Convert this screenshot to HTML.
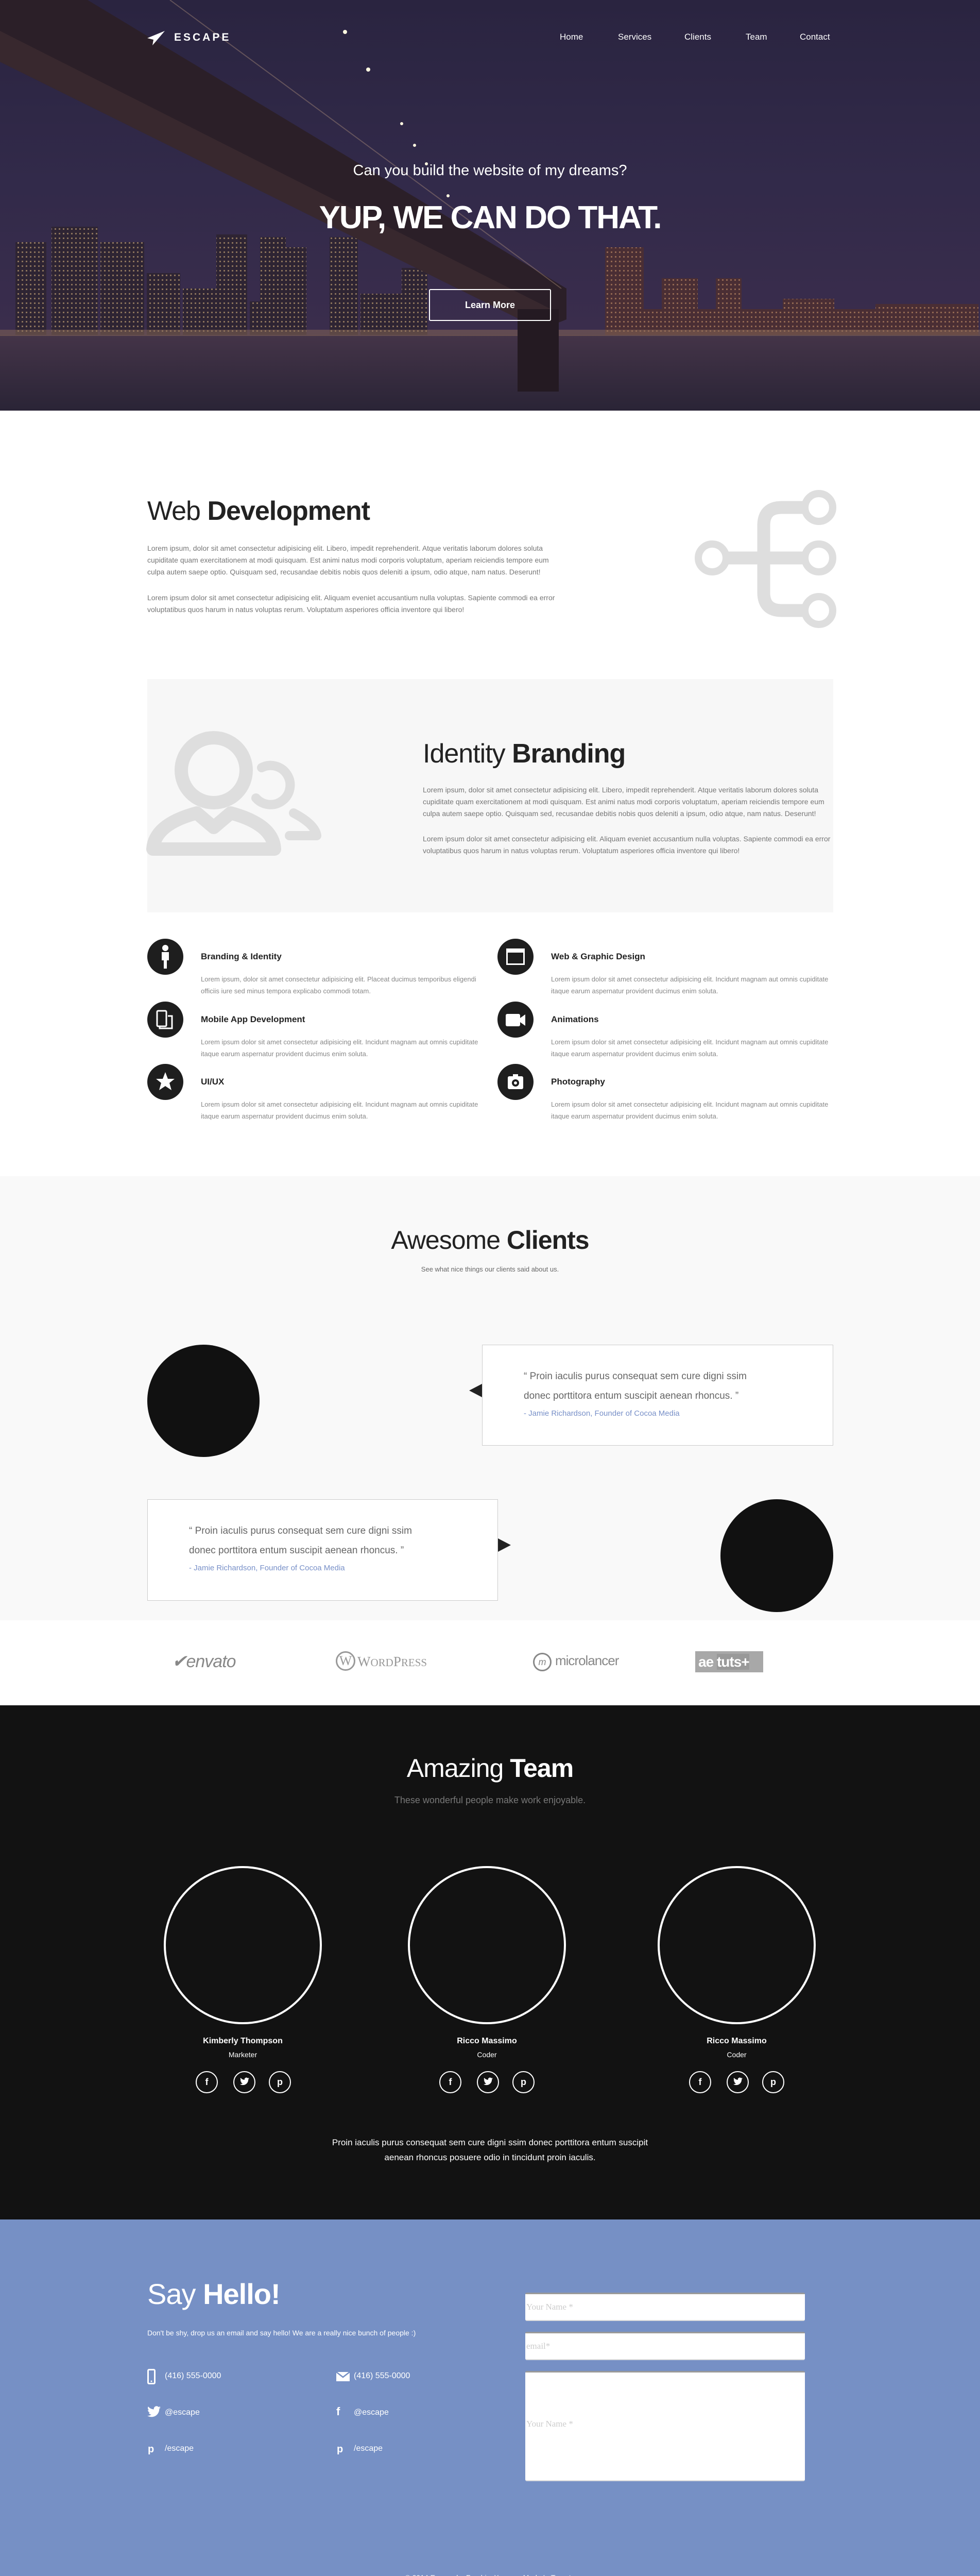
<!DOCTYPE html>
<html style="width:1903px;height:5051px;overflow:hidden"><head><meta charset="utf-8">
<style>
*{margin:0;padding:0;box-sizing:border-box}
body{width:1903px;height:5051px;font-family:"Liberation Sans",sans-serif;background:#fff;position:relative;overflow:hidden;color:#222}
.abs{position:absolute}
.hero{left:0;top:0;width:1903px;height:797px;background:linear-gradient(#2a2440 0%,#322a4a 45%,#3a2d4c 80%,#2f2740 100%);overflow:hidden}
.nav a{position:absolute;top:62px;color:#fff;font-size:17px;text-decoration:none}
h2.t{font-size:52px;font-weight:normal;letter-spacing:-1px}
h2.t b{font-weight:bold}
p.g{font-size:14px;line-height:23px;color:#777}
.svc .c{position:absolute;width:70px;height:70px;border-radius:50%;background:#1e1e1e}
.svc h4{position:absolute;font-size:17px;font-weight:bold;color:#222}
.svc p{position:absolute;font-size:13px;line-height:23px;color:#888;width:540px}
.box{background:#fff;border:1px solid #ccc}
.q{font-size:19px;line-height:38px;color:#666}
.au{font-size:15px;color:#7890c8;margin-top:6px}
.tc{border:4px solid #fff;border-radius:50%;width:307px;height:307px}
.soc{width:43px;height:43px;border:2px solid #fff;border-radius:50%;color:#fff;font-size:18px;text-align:center;line-height:39px;font-weight:bold}
.soc svg{margin-top:10px}
.name{color:#fff;font-weight:bold;font-size:16px;text-align:center;width:307px}
.role{color:#fff;font-size:14px;text-align:center;width:307px}
.ci{color:#fff;font-size:16px}
.inp{background:#fff;border-top:3px solid #999;border-bottom:2px solid #ddd;border-radius:3px;font-family:"Liberation Serif",serif;font-size:17px;color:#ccc;padding-left:2px}
</style></head><body>

<div class="abs hero">
<svg width="1903" height="797" viewBox="0 0 1903 797" style="position:absolute;left:0;top:0">
<defs>
<linearGradient id="w" x1="0" y1="0" x2="0" y2="1"><stop offset="0" stop-color="#443448"/><stop offset="1" stop-color="#2a2436"/></linearGradient>
<pattern id="win" width="8" height="9" patternUnits="userSpaceOnUse"><rect width="8" height="9" fill="#2e2433"/><rect x="2" y="2" width="3" height="3" fill="#c9a878" opacity="0.6"/></pattern>
<pattern id="win2" width="8" height="9" patternUnits="userSpaceOnUse"><rect width="8" height="9" fill="#4a2e34"/><rect x="2" y="2" width="3" height="3" fill="#d8a070" opacity="0.5"/></pattern>
</defs>
<g fill="url(#win)">
<rect x="30" y="470" width="60" height="190"/><rect x="100" y="440" width="90" height="220"/><rect x="195" y="470" width="85" height="190"/>
<rect x="285" y="530" width="65" height="130"/><rect x="355" y="560" width="65" height="100"/><rect x="420" y="455" width="60" height="205"/>
<rect x="485" y="585" width="60" height="75"/><rect x="505" y="460" width="50" height="200"/><rect x="555" y="480" width="40" height="180"/>
<rect x="640" y="460" width="55" height="200"/><rect x="700" y="570" width="80" height="90"/><rect x="780" y="520" width="50" height="140"/>
</g>
<g fill="url(#win2)">
<rect x="1175" y="480" width="75" height="180"/><rect x="1285" y="540" width="70" height="120"/><rect x="1390" y="540" width="50" height="120"/>
<rect x="1200" y="600" width="700" height="60"/><rect x="1520" y="580" width="100" height="80"/><rect x="1700" y="590" width="200" height="70"/>
</g>
<rect x="0" y="650" width="1903" height="147" fill="url(#w)"/>
<rect x="0" y="640" width="1903" height="12" fill="#8a6a58" opacity="0.5"/>
<polygon points="0,0 170,0 1100,560 1100,620 1050,640 0,120" fill="#2b1f28"/>
<polygon points="0,60 0,120 1050,640 1070,600" fill="#3e2c30" opacity="0.7"/>
<rect x="1005" y="600" width="80" height="160" fill="#241a22"/>
<line x1="330" y1="0" x2="1090" y2="560" stroke="#c9a688" stroke-width="2" opacity="0.35"/>
<g fill="#fff8e0"><circle cx="670" cy="62" r="4"/><circle cx="715" cy="135" r="4"/><circle cx="780" cy="240" r="3"/><circle cx="805" cy="282" r="3"/><circle cx="828" cy="318" r="3"/><circle cx="870" cy="380" r="3"/></g>
</svg>
<svg class="abs" style="left:286px;top:60px" width="34" height="28" viewBox="0 0 34 28"><path d="M34 0 L0 14 L12 17 L10 28 L17 20 Z" fill="#fff"/></svg>
<div class="abs" style="left:338px;top:61px;color:#fff;font-size:21px;font-weight:bold;letter-spacing:4px">ESCAPE</div>
<div class="nav"><a style="left:1087px">Home</a><a style="left:1200px">Services</a><a style="left:1329px">Clients</a><a style="left:1448px">Team</a><a style="left:1553px">Contact</a></div>
<div class="abs" style="left:0;width:1903px;top:315px;text-align:center;color:#fff;font-size:29px">Can you build the website of my dreams?</div>
<div class="abs" style="left:0;width:1903px;top:387px;text-align:center;color:#fff;font-size:62px;font-weight:bold;letter-spacing:-2px">YUP, WE CAN DO THAT.</div>
<div class="abs" style="left:833px;top:561px;width:237px;height:62px;border:2px solid #fff;border-radius:3px;color:#fff;font-size:18px;font-weight:bold;text-align:center;line-height:58px">Learn More</div>
</div>

<h2 class="abs t" style="left:286px;top:962px">Web <b>Development</b></h2>
<p class="abs g" style="left:286px;top:1053px;width:800px">Lorem ipsum, dolor sit amet consectetur adipisicing elit. Libero, impedit reprehenderit. Atque veritatis laborum dolores soluta cupiditate quam exercitationem at modi quisquam. Est animi natus modi corporis voluptatum, aperiam reiciendis tempore eum culpa autem saepe optio. Quisquam sed, recusandae debitis nobis quos deleniti a ipsum, odio atque, nam natus. Deserunt!</p>
<p class="abs g" style="left:286px;top:1149px;width:800px">Lorem ipsum dolor sit amet consectetur adipisicing elit. Aliquam eveniet accusantium nulla voluptas. Sapiente commodi ea error voluptatibus quos harum in natus voluptas rerum. Voluptatum asperiores officia inventore qui libero!</p>
<svg class="abs" style="left:0;top:0" width="1903" height="1800"><g fill="none" stroke="#dedede" stroke-width="25">
<circle cx="1383" cy="1083" r="27" stroke-width="14"/><circle cx="1590" cy="985" r="27" stroke-width="14"/><circle cx="1590" cy="1083" r="27" stroke-width="14"/><circle cx="1590" cy="1185" r="27" stroke-width="14"/>
<path d="M1410 1083 H1563 M1563 985 H1518 q-35 0 -35 35 V1150 q0 35 35 35 H1563"/></g></svg>

<div class="abs" style="left:286px;top:1318px;width:1332px;height:453px;background:#f7f7f7"></div>
<svg class="abs" style="left:0;top:0" width="700" height="1800"><g fill="none" stroke="#dedede" stroke-width="26" stroke-linecap="round" stroke-linejoin="round">
<circle cx="415" cy="1495" r="63"/><path d="M508 1490 A38 38 0 1 1 497 1549" stroke-width="18"/>
<path d="M297 1648 Q300 1600 382 1578 L415 1606 L448 1578 Q530 1600 533 1648 Z"/>
<path d="M570 1578 Q612 1600 615 1622 H562" stroke-width="18"/></g></svg>
<h2 class="abs t" style="left:821px;top:1433px">Identity <b>Branding</b></h2>
<p class="abs g" style="left:821px;top:1522px;width:790px">Lorem ipsum, dolor sit amet consectetur adipisicing elit. Libero, impedit reprehenderit. Atque veritatis laborum dolores soluta cupiditate quam exercitationem at modi quisquam. Est animi natus modi corporis voluptatum, aperiam reiciendis tempore eum culpa autem saepe optio. Quisquam sed, recusandae debitis nobis quos deleniti a ipsum, odio atque, nam natus. Deserunt!</p>
<p class="abs g" style="left:821px;top:1617px;width:800px">Lorem ipsum dolor sit amet consectetur adipisicing elit. Aliquam eveniet accusantium nulla voluptas. Sapiente commodi ea error voluptatibus quos harum in natus voluptas rerum. Voluptatum asperiores officia inventore qui libero!</p>

<div class="svc">
<div class="c" style="left:286px;top:1822px"><svg width="70" height="70"><circle cx="35" cy="18" r="6" fill="#fff"/><path d="M28 26h14v16h-4v16h-6v-16h-4z" fill="#fff"/></svg></div>
<h4 style="left:390px;top:1847px">Branding &amp; Identity</h4>
<p style="left:390px;top:1889px">Lorem ipsum, dolor sit amet consectetur adipisicing elit. Placeat ducimus temporibus eligendi officiis iure sed minus tempora explicabo commodi totam.</p>
<div class="c" style="left:966px;top:1822px"><svg width="70" height="70"><rect x="17" y="19" width="36" height="32" fill="#fff"/><rect x="20" y="27" width="30" height="21" fill="#1e1e1e"/></svg></div>
<h4 style="left:1070px;top:1847px">Web &amp; Graphic Design</h4>
<p style="left:1070px;top:1889px">Lorem ipsum dolor sit amet consectetur adipisicing elit. Incidunt magnam aut omnis cupiditate itaque earum aspernatur provident ducimus enim soluta.</p>
<div class="c" style="left:286px;top:1944px"><svg width="70" height="70"><rect x="19" y="18" width="18" height="30" rx="2" fill="none" stroke="#fff" stroke-width="3"/><path d="M40 28h8v24h-24v-3" fill="none" stroke="#fff" stroke-width="3"/></svg></div>
<h4 style="left:390px;top:1969px">Mobile App Development</h4>
<p style="left:390px;top:2011px">Lorem ipsum dolor sit amet consectetur adipisicing elit. Incidunt magnam aut omnis cupiditate itaque earum aspernatur provident ducimus enim soluta.</p>
<div class="c" style="left:966px;top:1944px"><svg width="70" height="70"><rect x="16" y="24" width="28" height="24" rx="3" fill="#fff"/><path d="M44 32l10-7v22l-10-7z" fill="#fff"/></svg></div>
<h4 style="left:1070px;top:1969px">Animations</h4>
<p style="left:1070px;top:2011px">Lorem ipsum dolor sit amet consectetur adipisicing elit. Incidunt magnam aut omnis cupiditate itaque earum aspernatur provident ducimus enim soluta.</p>
<div class="c" style="left:286px;top:2065px"><svg width="70" height="70"><path d="M35 16l5 13h13l-10 8 4 14-12-8-12 8 4-14-10-8h13z" fill="#fff"/></svg></div>
<h4 style="left:390px;top:2090px">UI/UX</h4>
<p style="left:390px;top:2132px">Lorem ipsum dolor sit amet consectetur adipisicing elit. Incidunt magnam aut omnis cupiditate itaque earum aspernatur provident ducimus enim soluta.</p>
<div class="c" style="left:966px;top:2065px"><svg width="70" height="70"><rect x="20" y="24" width="30" height="25" rx="3" fill="#fff"/><rect x="30" y="20" width="10" height="5" fill="#fff"/><circle cx="35" cy="37" r="7" fill="#1e1e1e"/><circle cx="35" cy="37" r="3" fill="#fff"/></svg></div>
<h4 style="left:1070px;top:2090px">Photography</h4>
<p style="left:1070px;top:2132px">Lorem ipsum dolor sit amet consectetur adipisicing elit. Incidunt magnam aut omnis cupiditate itaque earum aspernatur provident ducimus enim soluta.</p>
</div>

<div class="abs" style="left:0;top:2283px;width:1903px;height:862px;background:#f9f9f9"></div>
<h2 class="abs t" style="left:0;width:1903px;text-align:center;top:2378px;font-size:50px">Awesome <b>Clients</b></h2>
<div class="abs" style="left:0;width:1903px;text-align:center;top:2456px;font-size:13px;color:#666">See what nice things our clients said about us.</div>
<div class="abs" style="left:286px;top:2610px;width:218px;height:218px;border-radius:50%;background:#111"></div>
<div class="abs" style="left:911px;top:2686px;width:0;height:0;border-top:13px solid transparent;border-bottom:13px solid transparent;border-right:25px solid #222"></div>
<div class="abs box" style="left:936px;top:2610px;width:682px;height:196px;padding:42px 0 0 80px"><div class="q">“ Proin iaculis purus consequat sem cure digni ssim<br>donec porttitora entum suscipit aenean rhoncus. ”</div><div class="au">- Jamie Richardson, Founder of Cocoa Media</div></div>
<div class="abs box" style="left:286px;top:2910px;width:681px;height:197px;padding:42px 0 0 80px"><div class="q">“ Proin iaculis purus consequat sem cure digni ssim<br>donec porttitora entum suscipit aenean rhoncus. ”</div><div class="au">- Jamie Richardson, Founder of Cocoa Media</div></div>
<div class="abs" style="left:967px;top:2986px;width:0;height:0;border-top:13px solid transparent;border-bottom:13px solid transparent;border-left:25px solid #222"></div>
<div class="abs" style="left:1399px;top:2910px;width:219px;height:219px;border-radius:50%;background:#111"></div>

<div class="abs" style="left:334px;top:3205px;font-size:34px;font-style:italic;color:#888;letter-spacing:-1px">✔envato</div>
<div class="abs" style="left:652px;top:3205px;width:38px;height:38px;border-radius:50%;border:3px solid #999;color:#999;font-family:'Liberation Serif',serif;font-size:26px;text-align:center;line-height:32px">W</div>
<div class="abs" style="left:694px;top:3210px;font-family:'Liberation Serif',serif;font-size:27px;color:#999">W<span style="font-size:21px">ORD</span>P<span style="font-size:21px">RESS</span></div>
<div class="abs" style="left:1035px;top:3208px;width:36px;height:36px;border-radius:50%;border:3px solid #888;color:#888;font-size:18px;text-align:center;line-height:30px;font-style:italic">m</div>
<div class="abs" style="left:1078px;top:3208px;font-size:26px;color:#888;letter-spacing:-1px">microlancer</div>
<div class="abs" style="left:1350px;top:3205px;width:132px;height:41px;background:#a8a8a8;color:#fff;font-size:28px;font-weight:bold;line-height:41px;padding-left:6px;letter-spacing:-1px">ae <span style="background:#999">tuts+</span></div>

<div class="abs" style="left:0;top:3310px;width:1903px;height:998px;background:#121212"></div>
<h2 class="abs t" style="left:0;width:1903px;text-align:center;top:3403px;font-size:50px;color:#fff">Amazing <b>Team</b></h2>
<div class="abs" style="left:0;width:1903px;text-align:center;top:3484px;font-size:18px;color:#777">These wonderful people make work enjoyable.</div>
<div class="abs tc" style="left:318px;top:3622px"></div>
<div class="abs tc" style="left:792px;top:3622px"></div>
<div class="abs tc" style="left:1277px;top:3622px"></div>
<div class="abs name" style="left:318px;top:3953px">Kimberly Thompson</div><div class="abs role" style="left:318px;top:3980px">Marketer</div>
<div class="abs name" style="left:792px;top:3953px">Ricco Massimo</div><div class="abs role" style="left:792px;top:3980px">Coder</div>
<div class="abs name" style="left:1277px;top:3953px">Ricco Massimo</div><div class="abs role" style="left:1277px;top:3980px">Coder</div>
<div class="abs soc" style="left:380px;top:4020px">f</div><div class="abs soc" style="left:453px;top:4020px"><svg width="18" height="16" viewBox="0 0 24 20"><path d="M24 2.4a10 10 0 0 1-2.8.8A5 5 0 0 0 23.3.5a10 10 0 0 1-3.1 1.2A4.9 4.9 0 0 0 11.8 6 14 14 0 0 1 1.7.9a4.9 4.9 0 0 0 1.5 6.6A4.9 4.9 0 0 1 1 6.9a4.9 4.9 0 0 0 3.9 4.8 5 5 0 0 1-2.2.1 4.9 4.9 0 0 0 4.6 3.4A9.9 9.9 0 0 1 0 17.3 14 14 0 0 0 7.5 19.5c9 0 14-7.5 14-14v-.6A10 10 0 0 0 24 2.4z" fill="#fff"/></svg></div><div class="abs soc" style="left:522px;top:4020px">p</div>
<div class="abs soc" style="left:853px;top:4020px">f</div><div class="abs soc" style="left:926px;top:4020px"><svg width="18" height="16" viewBox="0 0 24 20"><path d="M24 2.4a10 10 0 0 1-2.8.8A5 5 0 0 0 23.3.5a10 10 0 0 1-3.1 1.2A4.9 4.9 0 0 0 11.8 6 14 14 0 0 1 1.7.9a4.9 4.9 0 0 0 1.5 6.6A4.9 4.9 0 0 1 1 6.9a4.9 4.9 0 0 0 3.9 4.8 5 5 0 0 1-2.2.1 4.9 4.9 0 0 0 4.6 3.4A9.9 9.9 0 0 1 0 17.3 14 14 0 0 0 7.5 19.5c9 0 14-7.5 14-14v-.6A10 10 0 0 0 24 2.4z" fill="#fff"/></svg></div><div class="abs soc" style="left:995px;top:4020px">p</div>
<div class="abs soc" style="left:1338px;top:4020px">f</div><div class="abs soc" style="left:1411px;top:4020px"><svg width="18" height="16" viewBox="0 0 24 20"><path d="M24 2.4a10 10 0 0 1-2.8.8A5 5 0 0 0 23.3.5a10 10 0 0 1-3.1 1.2A4.9 4.9 0 0 0 11.8 6 14 14 0 0 1 1.7.9a4.9 4.9 0 0 0 1.5 6.6A4.9 4.9 0 0 1 1 6.9a4.9 4.9 0 0 0 3.9 4.8 5 5 0 0 1-2.2.1 4.9 4.9 0 0 0 4.6 3.4A9.9 9.9 0 0 1 0 17.3 14 14 0 0 0 7.5 19.5c9 0 14-7.5 14-14v-.6A10 10 0 0 0 24 2.4z" fill="#fff"/></svg></div><div class="abs soc" style="left:1480px;top:4020px">p</div>
<div class="abs" style="left:0;width:1903px;text-align:center;top:4144px;font-size:17px;line-height:29px;color:#fff">Proin iaculis purus consequat sem cure digni ssim donec porttitora entum suscipit<br>aenean rhoncus posuere odio in tincidunt proin iaculis.</div>

<div class="abs" style="left:0;top:4308px;width:1903px;height:743px;background:#7690c5"></div>
<h2 class="abs t" style="left:286px;top:4420px;font-size:56px;color:#fff">Say <b>Hello!</b></h2>
<div class="abs" style="left:286px;top:4520px;font-size:14px;color:#fff">Don't be shy, drop us an email and say hello! We are a really nice bunch of people :)</div>
<svg class="abs" style="left:286px;top:4598px" width="16" height="30"><rect x="1.5" y="1.5" width="13" height="27" rx="2" fill="none" stroke="#fff" stroke-width="3"/><circle cx="8" cy="24" r="1.5" fill="#fff"/></svg>
<div class="abs ci" style="left:320px;top:4603px">(416) 555-0000</div>
<svg class="abs" style="left:653px;top:4604px" width="26" height="18"><rect width="26" height="18" fill="#fff"/><path d="M0 0l13 10 13-10" fill="none" stroke="#7690c5" stroke-width="2.5"/></svg>
<div class="abs ci" style="left:687px;top:4603px">(416) 555-0000</div>
<svg class="abs" style="left:286px;top:4670px" width="26" height="22" viewBox="0 0 24 20"><path d="M24 2.4a10 10 0 0 1-2.8.8A5 5 0 0 0 23.3.5a10 10 0 0 1-3.1 1.2A4.9 4.9 0 0 0 11.8 6 14 14 0 0 1 1.7.9a4.9 4.9 0 0 0 1.5 6.6A4.9 4.9 0 0 1 1 6.9a4.9 4.9 0 0 0 3.9 4.8 5 5 0 0 1-2.2.1 4.9 4.9 0 0 0 4.6 3.4A9.9 9.9 0 0 1 0 17.3 14 14 0 0 0 7.5 19.5c9 0 14-7.5 14-14v-.6A10 10 0 0 0 24 2.4z" fill="#fff"/></svg>
<div class="abs ci" style="left:320px;top:4674px">@escape</div>
<div class="abs ci" style="left:653px;top:4668px;font-size:22px;font-weight:bold">f</div>
<div class="abs ci" style="left:687px;top:4674px">@escape</div>
<div class="abs ci" style="left:287px;top:4743px;font-size:20px;font-weight:bold">p</div>
<div class="abs ci" style="left:320px;top:4744px">/escape</div>
<div class="abs ci" style="left:654px;top:4743px;font-size:20px;font-weight:bold">p</div>
<div class="abs ci" style="left:687px;top:4744px">/escape</div>
<div class="abs inp" style="left:1020px;top:4450px;width:543px;height:55px;line-height:50px">Your Name *</div>
<div class="abs inp" style="left:1020px;top:4526px;width:543px;height:55px;line-height:50px">email*</div>
<div class="abs inp" style="left:1020px;top:4602px;width:543px;height:214px;line-height:200px">Your Name *</div>
<div class="abs" style="left:0;width:1903px;text-align:center;top:4995px;font-size:14px;color:#fff">© 2014 Escape by FreebiesXpress • Made In Toronto</div>
</body></html>
